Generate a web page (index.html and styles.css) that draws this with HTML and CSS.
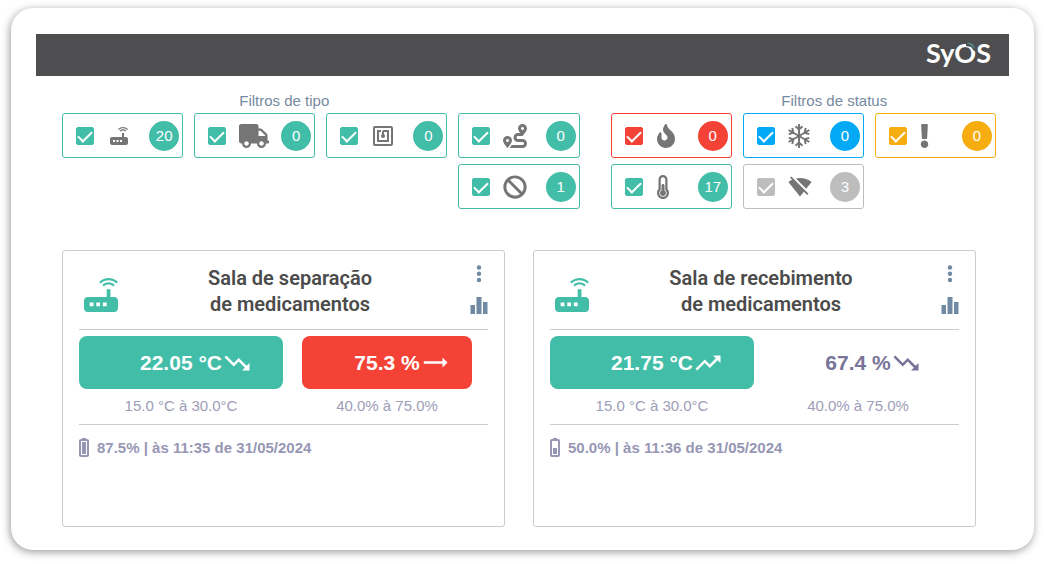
FILE: index.html
```
<!DOCTYPE html>
<html lang="pt-BR">
<head>
    <meta charset="UTF-8">
    <meta name="viewport" content="width=device-width, initial-scale=1.0">
    <title>SyOS</title>
    <link rel="stylesheet" href="styles.css">
</head>
<body>
    <!-- shared icons -->
    <svg class="sprite" aria-hidden="true">
        <symbol id="router" viewBox="3 3 18 18">
            <path d="M20.2 5.9l.8-.8C19.6 3.7 17.8 3 16 3s-3.6.7-5 2.1l.8.8C13 4.8 14.5 4.2 16 4.2s3 .6 4.2 1.7zm-.9.8c-.9-.9-2.1-1.4-3.3-1.4s-2.4.5-3.3 1.4l.8.8c.7-.7 1.6-1 2.5-1 .9 0 1.8.3 2.5 1l.8-.8zM19 13h-2V9h-2v4H5c-1.1 0-2 .9-2 2v4c0 1.1.9 2 2 2h14c1.1 0 2-.9 2-2v-4c0-1.1-.9-2-2-2zM8 18H6v-2h2v2zm3.5 0h-2v-2h2v2zm3.5 0h-2v-2h2v2z"/>
        </symbol>
        <symbol id="down" viewBox="0 0 24 24">
            <path d="M16 18l2.29-2.29-4.88-4.88-4 4L2 7.41 3.41 6l6 6 4-4 6.3 6.29L22 12v6z"/>
        </symbol>
        <symbol id="up" viewBox="0 0 24 24">
            <path d="M16 6l2.29 2.29-4.88 4.88-4-4L2 16.59 3.41 18l6-6 4 4 6.3-6.29L22 12V6z"/>
        </symbol>
        <symbol id="flat" viewBox="0 0 24 24">
            <path d="M22 11.500l-4-4v3H3v2h15v3z"/>
        </symbol>
        <symbol id="more" viewBox="0 0 6 18">
            <circle cx="3" cy="2.5" r="2.2"/>
            <circle cx="3" cy="8.700" r="2.2"/>
            <circle cx="3" cy="15" r="2.2"/>
        </symbol>
        <symbol id="chart" viewBox="0 0 18 18">
            <path d="M0.500 9H5v9H0.500zM6.500 1h5v17h-5zM13 6h4.500v12H13z"/>
        </symbol>
    </svg>

    <div class="panel">
        <header class="topbar">
            <div class="logo">SyOS
                <svg class="leaf" viewBox="0 0 10 10" aria-hidden="true">
                    <path class="leaf-gap" d="M0 0h10v9H8L5 5 0 4z"/>
                    <path class="leaf-fill" d="M1 1c4-1 7 1 8 6C7 6 6 4 5 3.500 4 2.500 2 2 1 1z"/>
                </svg>
            </div>
        </header>

        <main>
            <div class="filters">
                <section class="group types">
                    <h2>Filtros de tipo</h2>
                    <div class="options">
                        <label class="filter">
                            <input type="checkbox" aria-label="Roteador" checked>
                            <svg viewBox="0 0 24 24"><use href="#router" x="3" y="3" width="18" height="18"/></svg>
                            <span class="count">20</span>
                        </label>
                        <label class="filter">
                            <input type="checkbox" aria-label="Transporte" checked>
                            <svg class="truck" viewBox="0 0 640 512"><path d="M624 352h-16V243.9c0-12.7-5.1-24.9-14.1-33.9L494 110.1c-9-9-21.2-14.1-33.9-14.1H416V48c0-26.5-21.5-48-48-48H48C21.5 0 0 21.5 0 48v320c0 26.5 21.5 48 48 48h16c0 53 43 96 96 96s96-43 96-96h128c0 53 43 96 96 96s96-43 96-96h48c8.800 0 16-7.200 16-16v-32c0-8.800-7.200-16-16-16zM160 464c-26.500 0-48-21.500-48-48s21.500-48 48-48 48 21.500 48 48-21.500 48-48 48zm320 0c-26.500 0-48-21.500-48-48s21.500-48 48-48 48 21.500 48 48-21.500 48-48 48zm80-208H416V144h44.100l99.900 99.900V256z"/></svg>
                            <span class="count">0</span>
                        </label>
                        <label class="filter">
                            <input type="checkbox" aria-label="NFC" checked>
                            <svg viewBox="0 0 24 24"><path d="M20 2H4c-1.100 0-2 .9-2 2v16c0 1.100.9 2 2 2h16c1.100 0 2-.9 2-2V4c0-1.100-.9-2-2-2zm0 18H4V4h16v16zM18 6h-5c-1.100 0-2 .9-2 2v2.280c-.6.350-1 .980-1 1.720 0 1.100.9 2 2 2s2-.9 2-2c0-.740-.4-1.380-1-1.720V8h3v8H8V8h2V6H6v12h12V6z"/></svg>
                            <span class="count">0</span>
                        </label>
                        <label class="filter">
                            <input type="checkbox" aria-label="Rota" checked>
                            <svg viewBox="0 0 512 512"><path d="M416 320h-96c-17.600 0-32-14.400-32-32s14.400-32 32-32h96s96-107 96-160-43-96-96-96-96 43-96 96c0 25.500 22.200 63.400 45.300 96H320c-52.900 0-96 43.100-96 96s43.100 96 96 96h96c17.600 0 32 14.400 32 32s-14.400 32-32 32H185.500c-16 24.800-33.800 47.700-47.300 64H416c52.900 0 96-43.100 96-96s-43.100-96-96-96zm0-256c17.700 0 32 14.300 32 32s-14.300 32-32 32-32-14.300-32-32 14.300-32 32-32zM96 256c-53 0-96 43-96 96s96 160 96 160 96-107 96-160-43-96-96-96zm0 128c-17.700 0-32-14.300-32-32s14.300-32 32-32 32 14.300 32 32-14.300 32-32 32z"/></svg>
                            <span class="count">0</span>
                        </label>
                        <label class="filter last">
                            <input type="checkbox" aria-label="Bloqueado" checked>
                            <svg viewBox="0 0 512 512"><path d="M256 8C119.034 8 8 119.033 8 256s111.034 248 248 248 248-111.034 248-248S392.967 8 256 8zm130.108 117.892c65.448 65.448 70 165.481 20.677 235.637L150.470 105.216c70.204-49.356 170.226-44.735 235.638 20.676zM125.892 386.108c-65.448-65.448-70-165.481-20.677-235.637L361.530 406.784c-70.203 49.356-170.226 44.736-235.638-20.676z"/></svg>
                            <span class="count">1</span>
                        </label>
                    </div>
                </section>

                <section class="group status">
                    <h2>Filtros de status</h2>
                    <div class="options">
                        <label class="filter red">
                            <input type="checkbox" aria-label="Quente" checked>
                            <svg class="fire" viewBox="0 0 384 512"><path d="M216 23.860c0-23.800-30.650-32.770-44.150-13.040C48 191.850 224 200 224 288c0 35.630-29.110 64.460-64.850 63.990-35.170-.450-63.150-29.770-63.150-64.940v-85.510c0-21.700-26.470-32.230-41.430-16.500C27.800 213.160 0 261.330 0 320c0 105.870 86.130 192 192 192s192-86.130 192-192c0-170.290-168-193-168-296.140z"/></svg>
                            <span class="count">0</span>
                        </label>
                        <label class="filter blue">
                            <input type="checkbox" aria-label="Frio" checked>
                            <svg class="snow" viewBox="0 0 22 24">
                                <g id="arms">
                                    <path d="M11 0V24M7.500 2.200L11 5.500l3.500-3.300M7.500 21.800L11 18.500l3.500 3.300"/>
                                </g>
                                <use href="#arms" transform="rotate(60 11 12)"/>
                                <use href="#arms" transform="rotate(120 11 12)"/>
                            </svg>
                            <span class="count">0</span>
                        </label>
                        <label class="filter amber">
                            <input type="checkbox" aria-label="Alerta" checked>
                            <svg class="mark" viewBox="0 0 192 512"><path d="M176 432c0 44.112-35.888 80-80 80s-80-35.888-80-80 35.888-80 80-80 80 35.888 80 80zM25.260 25.199l13.600 272C39.499 309.972 50.041 320 62.830 320h66.340c12.789 0 23.331-10.028 23.970-22.801l13.600-272C167.425 11.490 156.496 0 142.770 0H49.230C35.504 0 24.575 11.490 25.260 25.199z"/></svg>
                            <span class="count">0</span>
                        </label>
                        <label class="filter">
                            <input type="checkbox" aria-label="Normal" checked>
                            <svg class="thermometer" viewBox="0 0 256 512"><path d="M192 384c0 35.346-28.654 64-64 64s-64-28.654-64-64c0-23.685 12.876-44.349 32-55.417V224c0-17.673 14.327-32 32-32s32 14.327 32 32v104.583c19.124 11.068 32 31.732 32 55.417zm32-84.653c19.912 22.563 32 52.194 32 84.653 0 70.696-57.303 128-128 128-.299 0-.609-.001-.909-.003C56.789 511.509-.357 453.636.002 383.333.166 351.061 12.270 321.588 32 299.347V96c0-53.019 42.981-96 96-96s96 42.981 96 96v203.347zM208 384c0-34.339-19.370-52.190-32-66.502V96c0-26.467-21.533-48-48-48S80 69.533 80 96v221.498c-12.732 14.428-31.825 32.100-31.999 66.080-.224 43.876 35.563 80.116 79.423 80.420L128 464c44.112 0 80-35.888 80-80z"/></svg>
                            <span class="count">17</span>
                        </label>
                        <label class="filter grey">
                            <input type="checkbox" aria-label="Sem sinal" checked>
                            <svg viewBox="0 0 24 24"><path d="M23.640 7c-.450-.340-4.930-4-11.640-4-1.500 0-2.890.190-4.150.480L18.180 13.800 23.640 7zm-6.600 8.220L3.270 1.440 2 2.720l2.050 2.060C1.910 5.760.590 6.820.360 7l11.630 14.490.010.010.010-.010 3.900-4.860 3.320 3.320 1.270-1.270-3.460-3.460z"/></svg>
                            <span class="count">3</span>
                        </label>
                    </div>
                </section>
            </div>

            <div class="cards">
                <article class="card">
                    <div class="card-head">
                        <svg class="device"><use href="#router"/></svg>
                        <h3>Sala de separação<br>de medicamentos</h3>
                        <div class="actions">
                            <button type="button" aria-label="Mais opções"><svg class="more"><use href="#more"/></svg></button>
                            <button type="button" aria-label="Gráfico"><svg class="chart"><use href="#chart"/></svg></button>
                        </div>
                    </div>
                    <div class="readings">
                        <div class="value ok">22.05 °C<svg><use href="#down"/></svg></div>
                        <div class="value alarm">75.3 %<svg><use href="#flat"/></svg></div>
                        <div class="range">15.0 °C à 30.0°C</div>
                        <div class="range">40.0% à 75.0%</div>
                    </div>
                    <div class="info">
                        <svg class="battery" viewBox="0 0 10 19"><path d="M3 0h4v2H3z"/><rect class="shell" x="1" y="2" width="8" height="16" rx="1"/><path d="M3 4h4v12H3z"/></svg>
                        87.5% | às 11:35 de 31/05/2024
                    </div>
                </article>

                <article class="card">
                    <div class="card-head">
                        <svg class="device"><use href="#router"/></svg>
                        <h3>Sala de recebimento<br>de medicamentos</h3>
                        <div class="actions">
                            <button type="button" aria-label="Mais opções"><svg class="more"><use href="#more"/></svg></button>
                            <button type="button" aria-label="Gráfico"><svg class="chart"><use href="#chart"/></svg></button>
                        </div>
                    </div>
                    <div class="readings">
                        <div class="value ok">21.75 °C<svg><use href="#up"/></svg></div>
                        <div class="value">67.4 %<svg><use href="#down"/></svg></div>
                        <div class="range">15.0 °C à 30.0°C</div>
                        <div class="range">40.0% à 75.0%</div>
                    </div>
                    <div class="info">
                        <svg class="battery" viewBox="0 0 10 19"><path d="M3 0h4v2H3z"/><rect class="shell" x="1" y="2" width="8" height="16" rx="1"/><path d="M3 10h4v6H3z"/></svg>
                        50.0% | às 11:36 de 31/05/2024
                    </div>
                </article>
            </div>
        </main>
    </div>
</body>
</html>
```
FILE: styles.css
```
* {
    box-sizing: border-box;
}

body {
    margin: 0;
    padding: 8px 10px 14px 11px;
    background-color: #fff;
    font-family: "Liberation Sans", Arial, sans-serif;
    font-size: 15px;
}

svg {
    display: block;
    flex-shrink: 0;
    fill: currentColor;
}

h2, h3 {
    margin: 0;
}

.sprite {
    position: absolute;
    width: 0;
    height: 0;
}

.panel {
    padding: 26px 25px 23px;
    border-radius: 22px;
    background-color: #fff;
    box-shadow: -1px 2px 9px rgba(0, 0, 0, 0.4);
}

.topbar {
    display: flex;
    justify-content: flex-end;
    height: 42px;
    padding: 0 18px;
    background-color: #4e4e50;
}

.logo {
    position: relative;
    color: #fff;
    font-family: Lato, sans-serif;
    font-size: 27px;
    font-weight: 700;
    line-height: 38px;
}

/* teal leaf over the letter O */
.leaf {
    position: absolute;
    top: 8px;
    right: 15px;
    width: 10px;
    height: 10px;
}

.leaf-gap {
    fill: #4e4e50;
}

.leaf-fill {
    fill: #4f8b88;
}

main {
    padding: 16px 13px 0 26px;
}

/* filters */
.filters {
    display: flex;
    gap: 31px;
}

.types {
    flex: 4 1 33px;
}

.status {
    flex: 3 1 22px;
}

.group h2 {
    margin-bottom: 3px;
    color: #768aa0;
    font-size: 15px;
    font-weight: 400;
    line-height: 18px;
    text-align: center;
}

.types h2 {
    padding-right: 73px;
}

.status h2 {
    padding-left: 62px;
}

.options {
    display: grid;
    grid-template-columns: repeat(4, 1fr);
    gap: 6px 11px;
}

.status .options {
    grid-template-columns: repeat(3, 1fr);
}

.filter {
    --tone: #41bda8;
    display: flex;
    align-items: center;
    height: 45px;
    padding: 0 3px 0 13px;
    border: 1px solid var(--tone);
    border-radius: 3px;
    color: #757575;
    cursor: pointer;
}

.filter.last {
    grid-column: 4;
}

.filter.red {
    --tone: #f44336;
}

.filter.blue {
    --tone: #03a9f4;
}

.filter.amber {
    --tone: #f5ad0f;
}

.filter.grey {
    --tone: #bdbdbd;
}

.filter input {
    display: flex;
    justify-content: center;
    width: 18px;
    height: 18px;
    margin: 0 13px 0 0;
    border: 1px solid var(--tone);
    border-radius: 2px;
    appearance: none;
    cursor: pointer;
}

.filter input:checked {
    background-color: var(--tone);
}

.filter input:checked::after {
    content: "";
    width: 6px;
    height: 12px;
    border: solid #fff;
    border-width: 0 2px 2px 0;
    transform: rotate(45deg);
}

.filter svg {
    width: 24px;
    height: 24px;
}

.filter .truck {
    width: 30px;
}

.filter .fire {
    width: 20px;
}

.filter .snow {
    width: 22px;
    fill: none;
    stroke: currentColor;
    stroke-width: 2;
}

.filter .thermometer {
    width: 14px;
}

.filter .mark {
    width: 9px;
}

.count {
    width: 30px;
    margin-left: auto;
    border-radius: 50%;
    background-color: var(--tone);
    color: #fff;
    line-height: 30px;
    text-align: center;
}

/* cards */
.cards {
    display: grid;
    grid-template-columns: 1fr 1fr;
    gap: 28px;
    margin-top: 41px;
    padding-right: 20px;
}

.card {
    min-height: 277px;
    padding: 0 16px;
    border: 1px solid #ccc;
    border-radius: 3px;
}

.card-head {
    display: flex;
    padding: 14px 0 12px 5px;
    border-bottom: 1px solid #ccc;
}

.device {
    width: 34px;
    height: 34px;
    margin-top: 13px;
    color: #41bda8;
}

.card h3 {
    flex: 1;
    padding-right: 8px;
    color: #4b4b4b;
    font-family: Roboto, sans-serif;
    font-size: 20px;
    font-weight: 600;
    line-height: 26px;
    text-align: center;
}

.actions {
    display: flex;
    flex-direction: column;
    gap: 13px;
}

.actions button {
    display: flex;
    justify-content: center;
    width: 18px;
    padding: 0;
    border: none;
    background: none;
    color: #708aa3;
    cursor: pointer;
}

.more {
    width: 6px;
    height: 18px;
}

.chart {
    width: 18px;
    height: 18px;
}

.readings {
    display: grid;
    grid-template-columns: 6fr 5fr;
    column-gap: 19px;
    padding: 6px 16px 9px 0;
    border-bottom: 1px solid #ccc;
}

.value {
    display: flex;
    justify-content: center;
    align-items: center;
    height: 53px;
    padding-left: 30px;
    border-radius: 8px;
    color: #787498;
    font-size: 21px;
    font-weight: 700;
}

.value svg {
    width: 30px;
    height: 30px;
}

.value.ok {
    background-color: #41bda8;
    color: #fff;
}

.value.alarm {
    background-color: #f44336;
    color: #fff;
}

.range {
    padding-top: 7px;
    color: #9d9db8;
    line-height: 19px;
    text-align: center;
}

.info {
    display: flex;
    align-items: center;
    gap: 8px;
    padding-top: 13px;
    color: #9797b5;
    font-weight: 700;
}

.battery {
    width: 10px;
    height: 19px;
}

.shell {
    fill: none;
    stroke: currentColor;
    stroke-width: 2;
}
```
